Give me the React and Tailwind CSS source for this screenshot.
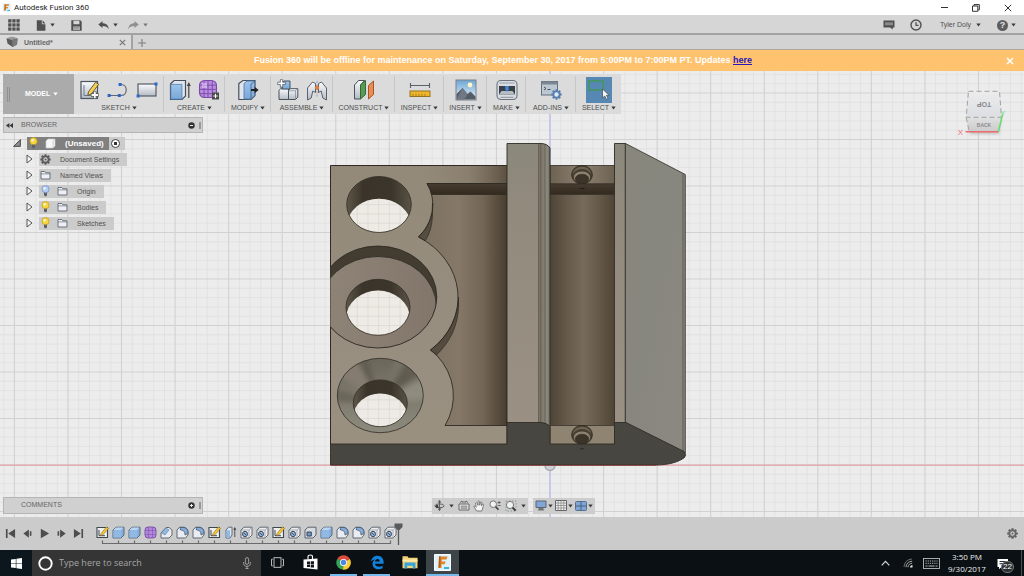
import React from "react";

const range = (a, b) => Array.from({ length: b - a + 1 }, (_, i) => a + i);

function Svg({ w, h, className = "", children, box }) {
  return (
    <svg width={w} height={h} viewBox={box || `0 0 ${w} ${h}`} className={`shrink-0 ${className}`} aria-hidden="true">
      {children}
    </svg>
  );
}

function Caret({ className = "text-[#3c3c3c]" }) {
  return (
    <Svg w={5} h={4} className={className}>
      <path d="M0.3 0.4h4.4L2.5 3.6z" fill="currentColor" />
    </Svg>
  );
}

/* ---------- shared gradients ---------- */

function SharedDefs() {
  return (
    <svg width="0" height="0" className="absolute" aria-hidden="true">
      <defs>
        <linearGradient id="blueFace" x1="0" y1="0" x2="0" y2="1">
          <stop offset="0" stopColor="#9cc3ea" />
          <stop offset="1" stopColor="#7ba8d8" />
        </linearGradient>
        <linearGradient id="greyFace" x1="0" y1="0" x2="0" y2="1">
          <stop offset="0" stopColor="#fafbfd" />
          <stop offset="1" stopColor="#b4bac4" />
        </linearGradient>
        <linearGradient id="skyFace" x1="0" y1="0" x2="0" y2="1">
          <stop offset="0" stopColor="#6ea6d4" />
          <stop offset="1" stopColor="#e4f1f8" />
        </linearGradient>
      </defs>
    </svg>
  );
}

/* ---------- toolbar icons ---------- */

const SketchIcon = () => (
  <Svg w={20} h={22}>
    <rect x="1" y="2.5" width="16.5" height="17" fill="url(#greyFace)" stroke="#4b5560" strokeWidth="1.2" />
    <path d="M4 6v10.5h9" fill="none" stroke="#6b7887" strokeWidth="1" />
    <path d="M8.5 12.8L15.6 3.2l3 2.2-7 9.4-3.8 1.6z" fill="#f5cf4e" stroke="#4d4326" strokeWidth="0.8" />
    <path d="M14.8 12.2v7.6M11 16h7.6" stroke="#555" strokeWidth="3.4" />
    <path d="M14.8 12.8v6.4M11.6 16H18" stroke="#fff" strokeWidth="1.8" />
  </Svg>
);
const ArcLineIcon = () => (
  <Svg w={22} h={20}>
    <path d="M2 15.5h12c7 0 7-11 0-11" fill="none" stroke="#5f6872" strokeWidth="1.2" />
    <path d="M0.6 14h3v3h-3zM10.8 14h3v3h-3zM11.6 3h3v3h-3z" fill="#2a66c8" />
  </Svg>
);
const RectIcon = () => (
  <Svg w={22} h={18}>
    <rect x="2" y="3" width="18" height="12" fill="url(#greyFace)" stroke="#535c68" strokeWidth="1.2" />
    <path d="M18.5 1.5h3v3h-3zM0.6 13.4h3v3h-3z" fill="#2a66c8" />
  </Svg>
);
const ExtrudeIcon = ({ w = 22, h = 22 }) => (
  <Svg w={w} h={h} box="0 0 22 22">
    <path d="M1.5 5L5 1.5h11.5V17L13 20.500H1.500z" fill="#dfe5ec" stroke="#46505c" strokeWidth="1.2" />
    <path d="M1.8 5.4H13v14.8H1.8z" fill="url(#blueFace)" stroke="#4a76a6" strokeWidth="0.7" />
    <path d="M19.8 19V6" stroke="#444" strokeWidth="1.2" />
    <path d="M17.8 7l2-4 2 4z" fill="#444" />
  </Svg>
);
const FormIcon = () => (
  <Svg w={22} h={22}>
    <rect x="1.5" y="1.5" width="17" height="17" rx="5" fill="#b98ce0" stroke="#7b4aa8" strokeWidth="1.1" />
    <path d="M6 2v16M10 2v16M14.3 2v16M2 6.2h16M2 10.4h16M2 14.6h16" stroke="#7b4aa8" strokeWidth="0.9" />
    <path d="M4 4h5v5H4z" fill="#e3cdf6" opacity=".6" />
    <rect x="14" y="13.5" width="7" height="7" fill="#4b4b4b" />
    <path d="M17.5 14.8v4.4M15.3 17h4.4" stroke="#fff" strokeWidth="1" />
  </Svg>
);
const PressPullIcon = () => (
  <Svg w={22} h={22}>
    <path d="M1.8 4.5L6 1.5h12v15l-4 4H1.8z" fill="#dfe5ec" stroke="#46505c" strokeWidth="1.2" />
    <path d="M7 4.5L10 2h7.5v14.5L14 20H7z" fill="url(#blueFace)" stroke="#4a76a6" strokeWidth="0.8" />
    <path d="M14 5v15M14 5l4-3" stroke="#3d6187" strokeWidth="0.8" />
    <path d="M14 11h4" stroke="#222" strokeWidth="2" />
    <path d="M17.6 7.8l4 3.2-4 3.2z" fill="#222" />
  </Svg>
);
const NewComponentIcon = () => (
  <Svg w={22} h={22}>
    <path d="M2 11.5l1.5-1.8h8v10.8H2z" fill="url(#greyFace)" stroke="#49525d" strokeWidth="1" />
    <path d="M5 3.8L7 2h6v8H5z" fill="url(#blueFace)" stroke="#49525d" strokeWidth="1" />
    <path d="M11.5 11.5l2-1.8h7.3v8.5l-2.3 2.3h-7z" fill="url(#greyFace)" stroke="#49525d" strokeWidth="1" />
    <path d="M11.5 11.8h7v8.5M18.5 11.8l2-2" fill="none" stroke="#7b8490" strokeWidth="0.7" />
    <path d="M4.5 0.4v8M0.5 4.4h8" stroke="#49525d" strokeWidth="3.2" />
    <path d="M4.5 1v6.8M1.1 4.4h6.8" stroke="#fff" strokeWidth="1.7" />
  </Svg>
);
const JointIcon = () => (
  <Svg w={22} h={22}>
    <path d="M1.5 9L6.5 3l3 1.500v9L6.800 12l-1.600 7-3.700 2z" fill="url(#greyFace)" stroke="#59626d" strokeWidth="1" />
    <path d="M20.5 9l-5-6-3 1.500v9l2.700-1.500 1.600 7 3.700 2z" fill="url(#greyFace)" stroke="#59626d" strokeWidth="1" />
    <path d="M11 2v16" stroke="#8a8f98" strokeWidth="0.8" strokeDasharray="2 1.4" />
    <path d="M11 6l2.4 2.8L11 11.6 8.6 8.8z" fill="#e7813a" />
  </Svg>
);
const PlaneIcon = () => (
  <Svg w={22} h={22}>
    <path d="M1.5 6L5.5 1.5h6L7.5 6v14h-6z" fill="url(#greyFace)" stroke="#49525d" strokeWidth="1" />
    <path d="M7.5 6l5-4.500v14L7.500 20z" fill="#5a9a55" stroke="#2f6b35" strokeWidth="1" />
    <path d="M15.5 6.500l5-4.500v13.500l-5 4.500z" fill="#ea8d54" stroke="#a75427" strokeWidth="1" />
  </Svg>
);
const MeasureIcon = () => (
  <Svg w={22} h={22}>
    <path d="M1.5 6.5h19" stroke="#59616b" strokeWidth="1" />
    <path d="M1.5 4v5M20.5 4v5" stroke="#59616b" strokeWidth="1.1" />
    <rect x="1" y="12" width="20" height="5.5" fill="#efb62b" stroke="#8a6a1c" strokeWidth="0.9" />
    <path d="M4 14.8v2.4M7 14.8v2.4M10 14.8v2.4M13 14.8v2.4M16 14.8v2.4" stroke="#8a6a1c" strokeWidth="0.7" />
  </Svg>
);
const InsertIcon = () => (
  <Svg w={22} h={22}>
    <rect x="1" y="1" width="20" height="20" fill="url(#skyFace)" stroke="#7a828b" strokeWidth="1" />
    <circle cx="15" cy="6" r="2.4" fill="#fff6c9" />
    <path d="M1.5 20.5V15l6-6 5 6 3-2.500 5 5v3z" fill="#545c66" />
    <path d="M7.5 9l5 6-3 5.500h-8z" fill="#6f7883" />
  </Svg>
);
const MakeIcon = () => (
  <Svg w={22} h={22}>
    <rect x="1" y="1.5" width="20" height="19" rx="4" fill="#d9dde2" stroke="#6b737c" strokeWidth="1.1" />
    <path d="M3.500 4h15" stroke="#9aa1a9" />
    <path d="M3 7h16v8.500H3z" fill="#3a4047" />
    <path d="M3 15.500L5.500 12h11l2.500 3.500z" fill="#b5bcc4" />
    <path d="M9.200 7h3.600v3.600L11 13l-1.800-2.400z" fill="#3d86d6" />
    <path d="M4.500 18.300h13" stroke="#8b929a" />
  </Svg>
);
const GearShape = ({ cx, cy, r, fill, hole }) => (
  <g>
    {range(0, 3).map((i) => (
      <rect key={i} x={cx - r * 0.2} y={cy - r} width={r * 0.4} height={r * 2} fill={fill} transform={`rotate(${i * 45} ${cx} ${cy})`} />
    ))}
    <circle cx={cx} cy={cy} r={r * 0.78} fill={fill} />
    <circle cx={cx} cy={cy} r={r * 0.42} fill={hole} />
  </g>
);
const AddInsIcon = () => (
  <Svg w={22} h={22}>
    <rect x="1.5" y="2.5" width="16" height="13.5" fill="#bcc7d4" stroke="#66707c" strokeWidth="1" />
    <path d="M1.5 2.5h16v3h-16z" fill="#7a8693" />
    <path d="M4 8l2 1.500L4 11M7.500 10.500h3" fill="none" stroke="#3d4650" strokeWidth="0.9" />
    <GearShape cx={16.5} cy={15.5} r={5.2} fill="#587fb0" hole="#dfe7f1" />
  </Svg>
);
const SelectIcon = () => (
  <Svg w={26} h={26}>
    <rect x="3" y="4" width="14" height="9" fill="none" stroke="#3f9a4d" strokeWidth="1.3" />
    <path d="M16.5 12v9l2.200-2 1.800 3.400 1.600-.8-1.700-3.300h2.800z" fill="#f4f6f8" stroke="#4a545e" strokeWidth="0.8" />
  </Svg>
);

function ToolGroup({ label, width, children, last }) {
  return (
    <div className={`flex flex-col items-center py-[2px] ${width}`}>
      <div className={`flex h-full w-full flex-col items-center pl-[1px] ${last ? "" : "border-r border-[#c6c6c6]"}`}>
        <div className="flex h-[27px] items-center justify-center gap-[7px]">{children}</div>
        <button className="flex h-[9px] items-center gap-[2px] whitespace-nowrap text-[7px] leading-[9px] text-[#4c4c4c]">
          {label}
          <Caret />
        </button>
      </div>
    </div>
  );
}

function IconButton({ label, children, className = "" }) {
  return (
    <button aria-label={label} className={`flex shrink-0 items-center justify-center ${className}`}>
      {children}
    </button>
  );
}

function Toolbar() {
  return (
    <div role="toolbar" aria-label="Model tools" className="flex h-[40px] w-fit bg-[#dbdbdb]">
      <button className="flex w-[71px] items-center bg-[#ababab] text-[7px] font-bold text-white">
        <span className="ml-[4px] h-[15px] w-[3px] border-x border-[#8f8f8f]" />
        <span className="ml-[15px] mr-[3px]">MODEL</span>
        <Caret className="text-white" />
      </button>
      <ToolGroup label="SKETCH" width="w-[90px]">
        <IconButton label="Create sketch"><SketchIcon /></IconButton>
        <IconButton label="Line"><ArcLineIcon /></IconButton>
        <IconButton label="Rectangle"><RectIcon /></IconButton>
      </ToolGroup>
      <ToolGroup label="CREATE" width="w-[61px]">
        <IconButton label="Extrude"><ExtrudeIcon /></IconButton>
        <IconButton label="Create form"><FormIcon /></IconButton>
      </ToolGroup>
      <ToolGroup label="MODIFY" width="w-[46px]">
        <IconButton label="Press pull"><PressPullIcon /></IconButton>
      </ToolGroup>
      <ToolGroup label="ASSEMBLE" width="w-[62px]">
        <IconButton label="New component"><NewComponentIcon /></IconButton>
        <IconButton label="Joint"><JointIcon /></IconButton>
      </ToolGroup>
      <ToolGroup label="CONSTRUCT" width="w-[62px]">
        <IconButton label="Offset plane"><PlaneIcon /></IconButton>
      </ToolGroup>
      <ToolGroup label="INSPECT" width="w-[49px]">
        <IconButton label="Measure"><MeasureIcon /></IconButton>
      </ToolGroup>
      <ToolGroup label="INSERT" width="w-[43px]">
        <IconButton label="Insert decal"><InsertIcon /></IconButton>
      </ToolGroup>
      <ToolGroup label="MAKE" width="w-[39px]">
        <IconButton label="3D print"><MakeIcon /></IconButton>
      </ToolGroup>
      <ToolGroup label="ADD-INS" width="w-[50px]">
        <IconButton label="Scripts and add-ins"><AddInsIcon /></IconButton>
      </ToolGroup>
      <ToolGroup label="SELECT" width="w-[45px]" last>
        <IconButton label="Select" className="bg-[#5788b4]"><SelectIcon /></IconButton>
      </ToolGroup>
    </div>
  );
}

/* ---------- browser tree ---------- */

const Bulb = ({ on = true }) => (
  <Svg w={9} h={12}>
    <circle cx="4.5" cy="4.2" r="3.6" fill={on ? "#f6d63f" : "#b5cdf5"} stroke={on ? "#c39a1c" : "#6d8cc4"} strokeWidth="0.7" />
    <circle cx="3.6" cy="3.2" r="1.2" fill="#fff" opacity=".8" />
    <path d="M3 7.800h3v2.800L4.500 11.600 3 10.600z" fill="#5d6168" />
  </Svg>
);
const Folder = () => (
  <Svg w={11} h={10}>
    <path d="M1 9V1.500h3.800l1 1.300H10V9z" fill="#eef0f3" stroke="#6b727c" strokeWidth="1" />
    <path d="M1 3.9h9" stroke="#6b727c" strokeWidth="0.7" />
  </Svg>
);
const Expander = () => (
  <Svg w={7} h={10}>
    <path d="M1 1l5 4-5 4z" fill="#f6f6f6" stroke="#555" strokeWidth="1" />
  </Svg>
);

function TreeRow({ icon, bulb, label }) {
  return (
    <li className="flex h-[16px] items-center pl-[23px]">
      <IconButton label={`Expand ${label}`} className="mr-[6px]"><Expander /></IconButton>
      <div className="flex h-[13px] items-center bg-[#cbcbcb] pl-[1px] pr-[8px] text-[7px] leading-[13px] text-[#505050]">
        {bulb !== undefined && <span className="mr-[7px] ml-[1px]"><Bulb on={bulb} /></span>}
        {icon}
        <span className="ml-[9px]">{label}</span>
      </div>
    </li>
  );
}

function BrowserPanel() {
  return (
    <section aria-label="Browser" className="mt-[3px] w-[200px]">
      <header className="flex h-[16px] items-center border border-[#b5b5b5] bg-[#d0d0d0] text-[7px] text-[#666]">
        <IconButton label="Collapse panel" className="ml-[2px]">
          <Svg w={7} h={5}><path d="M3.4 0v5L0 2.5zM7 0v5L3.6 2.5z" fill="#333" /></Svg>
        </IconButton>
        <h2 className="ml-[8px]">BROWSER</h2>
        <IconButton label="Minimise panel" className="ml-auto">
          <Svg w={7} h={7}><circle cx="3.5" cy="3.5" r="3.2" fill="#333" /><path d="M2 3.5h3" stroke="#eee" /></Svg>
        </IconButton>
        <span className="ml-[4px] mr-[1px] h-[7px] w-[2px] border-x border-[#999]" />
      </header>
      <ul className="mt-[2px]">
        <li className="flex h-[16px] items-center pl-[10px]">
          <IconButton label="Collapse document" className="mr-[6px]">
            <Svg w={8} h={8}><path d="M7.4 0.6v6.8H0.6z" fill="#8a8a8a" stroke="#444" strokeWidth="0.9" /></Svg>
          </IconButton>
          <div className="flex h-[13px] items-center bg-[#808080] pl-[2px] pr-[5px] text-[8px] leading-[13px] font-bold text-white">
            <Bulb />
            <Svg w={11} h={11} className="ml-[7px]">
              <path d="M1 3l2-2h7v7l-2 2H1z" fill="#f7f7f7" stroke="#c9ccd1" strokeWidth="0.7" />
              <path d="M8 3v7M8 3l2-2" stroke="#c3c6cc" strokeWidth="0.8" />
            </Svg>
            <span className="ml-[9px]">(Unsaved)</span>
          </div>
          <div className="flex h-[13px] w-[16px] items-center bg-[#cbcbcb] pl-[2px]">
            <input type="radio" name="active" aria-label="Activate (Unsaved)" defaultChecked className="size-[9px] appearance-none rounded-full border border-[#444] bg-[radial-gradient(circle,#333_0_1.5px,#fff_2px)]" />
          </div>
        </li>
        <TreeRow label="Document Settings" icon={<Svg w={11} h={11}><GearShape cx={5.5} cy={5.5} r={5.2} fill="#5c5c5c" hole="#cbcbcb" /><circle cx="5.5" cy="5.5" r="1" fill="#5c5c5c" /></Svg>} />
        <TreeRow label="Named Views" icon={<Folder />} />
        <TreeRow label="Origin" bulb={false} icon={<Folder />} />
        <TreeRow label="Bodies" bulb icon={<Folder />} />
        <TreeRow label="Sketches" bulb icon={<Folder />} />
      </ul>
    </section>
  );
}

/* ---------- canvas ---------- */

function GridLines() {
  return (
    <g>
      <path d={range(-150, 150).filter((i) => i % 5).map((i) => `M${550 + i * 10.71} -400V1000`).join("")} stroke="#e2e2e2" strokeWidth="1" />
      <path d={range(-90, 60).filter((i) => i % 5).map((i) => `M-1000 ${465 + i * 9.3}H2100`).join("")} stroke="#e2e2e2" strokeWidth="1" />
      <path d={range(-30, 30).map((i) => `M${550 + i * 53.56} -400V1000`).join("")} stroke="#d1d1d1" strokeWidth="1.1" />
      <path d={range(-18, 12).map((i) => `M-1000 ${465 + i * 46.5}H2100`).join("")} stroke="#d1d1d1" strokeWidth="1.1" />
    </g>
  );
}

function ScrewHole({ cy }) {
  return (
    <g>
      <ellipse cx="582" cy={cy} rx="10.4" ry="9.3" fill="#4b4234" stroke="#2d271e" strokeWidth="0.8" />
      <path d={`M573 ${cy - 1}a9 7 0 0 1 18 0a10 8.5 0 0 0 -18 0z`} fill="#6c6352" />
      <ellipse cx="582" cy={cy + 2.6} rx="8.6" ry="6.4" fill="#8d8370" stroke="#2d271e" strokeWidth="0.6" />
      <ellipse cx="582" cy={cy + 4.2} rx="6.8" ry="4.8" fill="#3c3429" stroke="#2d271e" strokeWidth="0.5" />
    </g>
  );
}

function ThroughHole({ id, cx, cy, rx, ry, wy, wrx, wry }) {
  return (
    <g>
      <clipPath id={id}><ellipse cx={cx} cy={cy} rx={rx} ry={ry} /></clipPath>
      <ellipse cx={cx} cy={cy} rx={rx} ry={ry} fill="url(#bore)" />
      <g clipPath={`url(#${id})`}>
        <clipPath id={`${id}w`}><ellipse cx={cx} cy={wy} rx={wrx} ry={wry} /></clipPath>
        <g clipPath={`url(#${id}w)`}>
          <rect x={cx - 50} y={cy - 50} width="100" height="100" fill="#eeebe6" />
          <path d={range(-24, -10).map((i) => `M${550 + i * 10.71} 150V450`).join("")} stroke="#dedad4" strokeWidth="0.9" />
          <path d={range(-34, 0).map((i) => `M330 ${465 + i * 9.3}H440`).join("")} stroke="#dedad4" strokeWidth="0.9" />
        </g>
      </g>
      <ellipse cx={cx} cy={cy} rx={rx} ry={ry} fill="none" stroke="#312c24" strokeWidth="0.8" />
    </g>
  );
}

const POCKET =
  "M427 183.5H507V425.5H445A73.5 64 0 0 0 436.5 355L430.5 350A80.5 70 0 0 0 418.5 237A53.5 47 0 0 0 427 183.5Z";

function Model() {
  const edge = "#2f2b24";
  return (
    <g strokeLinejoin="round">
      <defs>
        <linearGradient id="plate" x1="0" y1="0" x2="0" y2="1">
          <stop offset="0" stopColor="#938978" />
          <stop offset="0.6" stopColor="#978e80" />
          <stop offset="1" stopColor="#9a9080" />
        </linearGradient>
        <linearGradient id="plateTop" x1="0" x2="1">
          <stop offset="0" stopColor="#857a6a" stopOpacity="0" />
          <stop offset="0.5" stopColor="#857a6a" stopOpacity=".6" />
          <stop offset="1" stopColor="#5c5040" />
        </linearGradient>
        <linearGradient id="floor" x1="0" x2="1">
          <stop offset="0" stopColor="#7b7061" />
          <stop offset="0.45" stopColor="#857868" />
          <stop offset="0.72" stopColor="#736655" />
          <stop offset="1" stopColor="#483d2f" />
        </linearGradient>
        <linearGradient id="channel" x1="0" x2="1">
          <stop offset="0" stopColor="#4e4436" />
          <stop offset="0.3" stopColor="#685d4d" />
          <stop offset="0.52" stopColor="#766b5a" />
          <stop offset="0.75" stopColor="#665a49" />
          <stop offset="1" stopColor="#4f4436" />
        </linearGradient>
        <linearGradient id="chTop" x1="0" x2="1">
          <stop offset="0" stopColor="#6d6252" />
          <stop offset="0.5" stopColor="#8c8170" />
          <stop offset="1" stopColor="#6d6252" />
        </linearGradient>
        <linearGradient id="rib" x1="0" y1="0" x2="0" y2="1">
          <stop offset="0" stopColor="#8b887c" />
          <stop offset="0.25" stopColor="#928a7d" />
          <stop offset="1" stopColor="#9a9184" />
        </linearGradient>
        <linearGradient id="fillet" x1="0" x2="1">
          <stop offset="0" stopColor="#787163" />
          <stop offset="0.5" stopColor="#857f71" />
          <stop offset="0.75" stopColor="#8b8a80" />
          <stop offset="1" stopColor="#6c6c64" />
        </linearGradient>
        <linearGradient id="wall" x1="0" y1="0" x2="0" y2="1">
          <stop offset="0" stopColor="#463d30" />
          <stop offset="1" stopColor="#33291d" />
        </linearGradient>
        <linearGradient id="slope" x1="0" y1="0" x2="1" y2="1">
          <stop offset="0" stopColor="#87877d" />
          <stop offset="0.5" stopColor="#88877f" />
          <stop offset="1" stopColor="#8b8982" />
        </linearGradient>
        <linearGradient id="bore" x1="0" x2="1">
          <stop offset="0" stopColor="#5e5749" />
          <stop offset="0.25" stopColor="#3a342b" />
          <stop offset="0.7" stopColor="#3b352b" />
          <stop offset="1" stopColor="#5a5447" />
        </linearGradient>
        <linearGradient id="cone" x1="0" y1="0" x2="0" y2="1">
          <stop offset="0" stopColor="#6c675b" />
          <stop offset="1" stopColor="#8d8a7e" />
        </linearGradient>
        <linearGradient id="cboreFloor" x1="0" x2="1">
          <stop offset="0" stopColor="#8f8577" />
          <stop offset="1" stopColor="#82766a" />
        </linearGradient>
        <clipPath id="plateClip"><rect x="330.5" y="165" width="177" height="279" /></clipPath>
        <clipPath id="cboreClip"><ellipse cx="378" cy="297" rx="58.8" ry="51" /></clipPath>
        <clipPath id="coneClip"><ellipse cx="380.3" cy="395.5" rx="43" ry="37.2" /></clipPath>
        <filter id="soft"><feGaussianBlur stdDeviation="2.6" /></filter>
      </defs>

      {/* base plate and pocket */}
      <rect x="330.5" y="165.5" width="177" height="279" fill="url(#plate)" stroke={edge} strokeWidth="1" />
      <rect x="427" y="166" width="80" height="18" fill="url(#plateTop)" />
      <path d={POCKET} fill="url(#floor)" />
      <path d="M427 183.5H507V194.5H431.8Q430.5 188 427 183.5Z" fill="url(#wall)" stroke={edge} strokeWidth="0.8" />
      <path d="M418.5 237A53.5 47 0 0 0 432.5 203V215Q432 230 425.5 240.5Z" fill="#554d40" stroke={edge} strokeWidth="0.7" />
      <path d="M430.5 350A80.5 70 0 0 0 458.5 297L458.6 306C458 326 450 342 436.5 355Z" fill="#554c3f" stroke={edge} strokeWidth="0.7" />
      <path d={POCKET} fill="none" stroke={edge} strokeWidth="0.9" />

      {/* upper bore */}
      <ThroughHole id="h1" cx={379} cy={204.5} rx={32.3} ry={28} wy={226} wrx={32} wry={27.2} />

      {/* counterbore */}
      <g clipPath="url(#plateClip)">
        <ellipse cx="378" cy="297" rx="58.8" ry="51" fill="#423c31" />
        <g clipPath="url(#cboreClip)">
          <ellipse cx="378" cy="307.5" rx="58.5" ry="51" fill="url(#cboreFloor)" stroke={edge} strokeWidth="0.8" />
        </g>
        <ellipse cx="378" cy="297" rx="58.8" ry="51" fill="none" stroke={edge} strokeWidth="0.9" />
      </g>
      <ThroughHole id="h2" cx={378} cy={307.3} rx={32} ry={28} wy={318} wrx={31.8} wry={27.4} />

      {/* countersink */}
      <ellipse cx="380.3" cy="395.5" rx="43" ry="37.2" fill="url(#cone)" />
      <g clipPath="url(#coneClip)">
        <g filter="url(#soft)">
          <path d="M380 402L333 372L352 352z" fill="#857c6f" />
          <path d="M380 402L352 352L366 350z" fill="#625d51" />
          <path d="M380 402L398 352L408 354z" fill="#777367" />
          <path d="M380 402L412 356L424 370z" fill="#605b50" />
          <path d="M380 402L427 376V400z" fill="#8f8b7f" />
          <path d="M380 402L334 388V402z" fill="#6b665a" />
        </g>
      </g>
      <ellipse cx="380.3" cy="395.5" rx="43" ry="37.2" fill="none" stroke={edge} strokeWidth="0.8" />
      <ThroughHole id="h3" cx={380.3} cy={403.3} rx={27} ry={23.4} wy={416.8} wrx={27} wry={23.2} />

      {/* channel */}
      <rect x="550" y="165.5" width="64.5" height="19" fill="url(#chTop)" stroke={edge} strokeWidth="0.8" />
      <rect x="550" y="194.5" width="64.5" height="231" fill="url(#channel)" />
      <ScrewHole cy={174.8} />
      <rect x="550" y="183.8" width="64.5" height="10.7" fill="url(#wall)" stroke={edge} strokeWidth="0.8" />
      <path d="M579.5 188.500h5" stroke="#241d14" />
      <rect x="550" y="425.5" width="64.5" height="19" fill="#8f8471" stroke={edge} strokeWidth="0.8" />
      <ScrewHole cy={434.8} />

      {/* centre rib */}
      <path d="M507 143.5H541Q547 143.5 550 148V426H507Z" fill="url(#rib)" />
      <path d="M538.5 143.8H541Q547 143.5 550 148V426H538.5Z" fill="url(#fillet)" />
      <path d="M538.5 144V423M540.8 144V423M545 145V424" stroke="#5b564b" strokeWidth="0.7" />
      <path d="M507 444V143.5H541Q547 143.5 550 148V426" fill="none" stroke={edge} strokeWidth="0.9" />

      {/* right block */}
      <rect x="614.5" y="143.5" width="11" height="280" fill="url(#rib)" stroke={edge} strokeWidth="0.9" />
      <path d="M625.5 143.5L685.3 174.5V453L625.5 423Z" fill="url(#slope)" stroke={edge} strokeWidth="0.8" />
      <path d="M625.3 144V423" stroke="#4b473e" strokeWidth="1.2" />
      <path d="M683 174V451" stroke="#63625b" strokeWidth="1.2" />

      {/* front face */}
      <path
        d="M330.5 444H507V422.5H541Q547 422.8 550 426.5V444H614.5V422.5H626L684 451.5Q687 454.5 684.5 457.5C679 462 668 465 656 465H330.5Z"
        fill="#484640"
        stroke={edge}
        strokeWidth="0.9"
      />
      <path d="M580 448.7h4" stroke="#2f2d28" />
    </g>
  );
}

function Scene() {
  return (
    <svg className="absolute inset-0 h-full w-full" viewBox="0 71 1024 446" preserveAspectRatio="xMidYMid slice" role="img" aria-label="Model viewport">
      <GridLines />
      <path d="M550 -400V1000" stroke="#c3c3ee" strokeWidth="1.6" />
      <circle cx="550" cy="465.5" r="5" fill="#cfcfd4" stroke="#aaaab2" strokeWidth="1.4" />
      <path d="M-1000 465.2H2100" stroke="#e3a3a3" strokeWidth="1.2" />
      <Model />
      <path d="M330.5 465.3H656" stroke="#7c3b38" strokeWidth="0.8" />
    </svg>
  );
}

function ViewCube() {
  return (
    <Svg w={50} h={50} box="957 86 50 50">
      <defs>
        <linearGradient id="cubeTop" x1="0" y1="0" x2="0" y2="1">
          <stop offset="0" stopColor="#ececec" />
          <stop offset="1" stopColor="#dcdee2" />
        </linearGradient>
        <linearGradient id="cubeFront" x1="0" y1="0" x2="0" y2="1">
          <stop offset="0" stopColor="#e0e0e1" />
          <stop offset="1" stopColor="#cbcbcc" />
        </linearGradient>
        <filter id="cubeShadow"><feGaussianBlur stdDeviation="1.4" /></filter>
      </defs>
      <path d="M969 122l32-2-2 14h-29z" fill="#9a9a9a" opacity=".55" filter="url(#cubeShadow)" />
      <path d="M968.5 91.3h31l2 26h-35.3z" fill="url(#cubeTop)" />
      <path d="M966.2 117.4h35.3L998.5 131.5h-29.2z" fill="url(#cubeFront)" />
      <path d="M968.5 91.3h31l2 26h-35.3zM966.2 117.4l3 14" fill="none" stroke="#a2a2a2" strokeWidth="1" strokeDasharray="5 3" />
      <path d="M965.5 131.8h33" stroke="#e96b6b" strokeWidth="1.4" />
      <path d="M998.5 131.5l4-17" stroke="#5fdc68" strokeWidth="1.4" />
      <text x="984" y="101.5" fontSize="7" textAnchor="middle" fill="#85878b" transform="rotate(180 984 101.5)" className="font-bold">TOP</text>
      <text x="984" y="127.3" fontSize="5" textAnchor="middle" fill="#8b8c90" className="font-bold">BACK</text>
      <text x="957.8" y="134.5" fontSize="8" fill="#ee7070">X</text>
      <text x="1000.500" y="115.5" fontSize="7" fill="#63e06c">Y</text>
    </Svg>
  );
}

/* ---------- navigation bar ---------- */

function NavBar() {
  return (
    <div className="flex gap-[5px]" role="toolbar" aria-label="Navigation">
      <div className="flex h-[16px] w-[96px] items-center justify-between bg-[#cdcdcd] px-[2px]">
        <IconButton label="Orbit">
          <Svg w={11} h={11}><path d="M5.5 0.500v10" stroke="#666" fill="none" /><path d="M5.500 0l1.800 2.400H3.700zM5.500 11l1.800-2.400H3.700z" fill="#555" /><ellipse cx="5.5" cy="5.8" rx="4.6" ry="1.900" fill="none" stroke="#555" strokeWidth="0.9" /><circle cx="3" cy="6.4" r="1.4" fill="#333" /></Svg>
        </IconButton>
        <Caret />
        <IconButton label="Look at">
          <Svg w={12} h={11}><path d="M1 4h10v6H1z" fill="#e8e8e8" stroke="#666" /><path d="M3.2 6h5.6v2.4H3.2z" fill="#bbb" stroke="#777" strokeWidth="0.7" /><path d="M2 2.6L4 1v1h4V1l2 1.6" fill="none" stroke="#666" /></Svg>
        </IconButton>
        <IconButton label="Pan">
          <Svg w={12} h={12}><path d="M3.6 11C2.6 9 1.4 7.6 0.8 6.4c.7-.8 1.5-.2 2.4.9L2.6 3c.9-.9 1.5-.3 1.8.7L5 5.4V1.4c.8-.9 1.5-.4 1.600.5l.1 3.3.8-2.900c.9-.7 1.500-.1 1.300.8l-.4 2.700 1-1.700c.9-.4 1.400.2 1.100 1C9.900 7.200 9.600 8.600 8.800 11z" fill="#f4f4f4" stroke="#666" strokeWidth="0.8" /></Svg>
        </IconButton>
        <IconButton label="Zoom">
          <Svg w={12} h={11}><circle cx="4.200" cy="4.200" r="3.300" fill="#eef3f6" stroke="#777" /><path d="M6.600 6.600L9.500 9.800" stroke="#444" strokeWidth="1.700" /><path d="M8.500 2.500h3.200M10.100 1v3M8.500 5.500h3.200" stroke="#555" strokeWidth="0.800" /></Svg>
        </IconButton>
        <IconButton label="Fit">
          <Svg w={12} h={12}><path d="M1 1h10v10H1z" fill="none" stroke="#888" strokeWidth="0.800" strokeDasharray="1.500 1.500" /><circle cx="5" cy="5" r="3.600" fill="#eef5f3" stroke="#777" /><path d="M7.600 7.600l3 3" stroke="#333" strokeWidth="1.800" /></Svg>
        </IconButton>
        <Caret />
      </div>
      <div className="flex h-[16px] w-[62px] items-center justify-between bg-[#cdcdcd] px-[2px]">
        <IconButton label="Display settings">
          <Svg w={12} h={11}><path d="M1 1h10v6.500H1z" fill="#7fa6d6" stroke="#5d6670" /><path d="M4 8h4v1.500H4zM2.800 10h6.400" fill="#888" stroke="#666" strokeWidth="0.800" /></Svg>
        </IconButton>
        <Caret />
        <IconButton label="Grid and snaps">
          <Svg w={12} h={11}><path d="M0.500 0.500h11v10h-11z" fill="#eee" stroke="#666" /><path d="M3.200 1v9M6 1v9M8.800 1v9M1 3h10M1 5.500h10M1 8h10" stroke="#8a8a8a" strokeWidth="0.800" /></Svg>
        </IconButton>
        <Caret />
        <IconButton label="Viewports">
          <Svg w={12} h={10}><rect x="0.500" y="0.500" width="11" height="9" rx="1" fill="#7fa6d6" stroke="#56708f" /><path d="M6 0.500v9M0.500 5h11" stroke="#48617f" /></Svg>
        </IconButton>
        <Caret />
      </div>
    </div>
  );
}

/* ---------- timeline ---------- */

const MiniSketch = () => (
  <Svg w={13} h={13}>
    <path d="M1 1.500h10.500v10H1z" fill="#eef0f2" stroke="#3f4650" strokeWidth="1.100" />
    <path d="M3 4v5.700h6" fill="none" stroke="#3f4650" strokeWidth="1" />
    <path d="M5 7.500L10.500 0.800l2 1.600L7 8.800l-2.500.8z" fill="#f2c53a" stroke="#7b611b" strokeWidth="0.500" />
  </Svg>
);
const MiniBox = () => (
  <Svg w={13} h={13}>
    <path d="M1 4l3-2.800h8V9l-3 3H1z" fill="#86afdc" stroke="#4f6076" strokeWidth="0.900" />
    <path d="M1.400 4.200H9V11.600H1.400z" fill="#92b9e3" />
    <path d="M1.500 4L4 1.600h7.400L9 4z" fill="#bcd6f1" />
  </Svg>
);
const MiniForm = () => (
  <Svg w={13} h={13}>
    <rect x="1" y="1" width="11" height="11" rx="3" fill="#b387dd" stroke="#764aa3" strokeWidth="0.900" />
    <path d="M4.500 1v11M8.500 1v11M1 4.500h11M1 8.500h11" stroke="#8a5fb8" strokeWidth="0.800" />
  </Svg>
);
const MiniChamfer = () => (
  <Svg w={13} h={13}>
    <path d="M1 7l5-5.500h3l3 2.500V9l-3 3H1z" fill="#e9ecf0" stroke="#555e69" strokeWidth="0.900" />
    <path d="M1.500 7l4.500-5 3 2-4 5z" fill="#92b9e3" stroke="#5a7ba3" strokeWidth="0.600" />
  </Svg>
);
const MiniFillet = () => (
  <Svg w={13} h={13}>
    <path d="M1 4l2.500-2.800H8c3 .5 4 2.800 4 5.800v2l-2.500 3H1z" fill="#e9ecf0" stroke="#555e69" strokeWidth="0.900" />
    <path d="M4 1.500h4c3 .5 4 3 4 6L9 9c0-3-1-4.800-4.500-5z" fill="#86aedb" stroke="#3e4e63" strokeWidth="0.700" />
  </Svg>
);
const MiniHole = () => (
  <Svg w={13} h={13}>
    <path d="M1 4l3-2.800h8V9l-3 3H1z" fill="#eceef1" stroke="#555e69" strokeWidth="0.900" />
    <path d="M1 4h8v8M9 4l3-2.800" fill="none" stroke="#8a929c" strokeWidth="0.700" />
    <ellipse cx="5" cy="8" rx="2.500" ry="2.700" fill="#8fb3dc" stroke="#333d4a" strokeWidth="0.900" />
    <path d="M4 7l2 2" stroke="#333d4a" strokeWidth="0.800" />
  </Svg>
);
const MiniShell = () => (
  <Svg w={13} h={13}>
    <path d="M1 4l3-2.800h8V9l-3 3H1z" fill="#d6dbe1" stroke="#4f5864" strokeWidth="0.900" />
    <path d="M3 6h4.300v4H3z" fill="#6f97c6" stroke="#333d4a" strokeWidth="0.900" />
  </Svg>
);
const MiniExtrude = () => (
  <Svg w={13} h={13}>
    <path d="M2 4l2.500-2.800H8V9l-2 3H2z" fill="#dfe6ee" stroke="#4f6076" strokeWidth="0.900" />
    <path d="M2.400 4.300H6v7.300H2.400z" fill="#92b9e3" />
    <path d="M10.800 11V3" stroke="#444" strokeWidth="0.900" />
    <path d="M9.200 3.800L10.800 1l1.600 2.800z" fill="#444" />
  </Svg>
);

const FEATURES = [
  ["Sketch1", MiniSketch],
  ["Box1", MiniBox],
  ["Box2", MiniBox],
  ["Form1", MiniForm],
  ["Chamfer1", MiniChamfer],
  ["Fillet1", MiniFillet],
  ["Fillet2", MiniFillet],
  ["Sketch2", MiniSketch],
  ["Extrude1", MiniExtrude],
  ["Hole1", MiniHole],
  ["Hole2", MiniHole],
  ["Sketch3", MiniSketch],
  ["Hole3", MiniHole],
  ["Shell1", MiniShell],
  ["Box3", MiniBox],
  ["Fillet3", MiniFillet],
  ["Fillet4", MiniFillet],
  ["Hole4", MiniHole],
  ["Hole5", MiniHole],
];

function Timeline() {
  const controls = [
    ["Go to start", "M1 1v10h1.800V1zM11 1v10L3.500 6z"],
    ["Step back", "M7.500 1.500v9L1.500 6zM8.500 3.500h1.800v5H8.500z"],
    ["Play", "M2 0.800v10.400L11 6z"],
    ["Step forward", "M4.500 1.500v9L10.500 6zM1.700 3.500h1.800v5H1.700z"],
    ["Go to end", "M1 1v10L8.500 6zM9.200 1v10H11V1z"],
  ];
  return (
    <section aria-label="Timeline" className="flex h-[33px] shrink-0 items-center bg-[#cbcbcb] pr-[6px]">
      <div className="flex items-center gap-[4px] pl-[4px]">
        {controls.map(([label, d]) => (
          <IconButton key={label} label={label} className="w-[13px]">
            <Svg w={11} h={11} box="0 0 12 12"><path d={d} fill="#4d4d4d" /></Svg>
          </IconButton>
        ))}
      </div>
      <ol className="ml-[9px] flex">
        {FEATURES.map(([name, Icon], i) => (
          <li key={name} className="flex w-[16px] flex-col items-center pt-[3px]">
            <IconButton label={name}><Icon /></IconButton>
            <Svg w={16} h={6}>
              <path d={i === 0 ? "M8.500 1.500V4.500H16" : i === FEATURES.length - 1 ? "M0 4.500H8.500V1.500" : "M0 4.500H16M8.500 1.500V4.500"} stroke="#6a6a6a" fill="none" strokeWidth="1.200" />
            </Svg>
          </li>
        ))}
      </ol>
      <IconButton label="Timeline marker" className="-ml-[4px]">
        <Svg w={9} h={22}><path d="M0.500 0.500h8v3.500l-3 3h-2l-3-3z" fill="#5a5a5a" /><path d="M4.500 4v18" stroke="#5a5a5a" strokeWidth="1.300" /></Svg>
      </IconButton>
      <IconButton label="Timeline settings" className="ml-auto">
        <Svg w={11} h={11}><GearShape cx={5.5} cy={5.5} r={5.3} fill="#666" hole="#cbcbcb" /><circle cx="5.500" cy="5.500" r="1" fill="#666" /></Svg>
      </IconButton>
    </section>
  );
}

/* ---------- Windows task bar ---------- */

function TaskButton({ label, active, running, children }) {
  return (
    <button aria-label={label} className={`flex h-full w-[33px] flex-col items-center ${active ? "bg-[#3d4548]" : ""}`}>
      <span className="flex flex-1 items-center">{children}</span>
      <span className={`h-[2px] ${active ? "w-full bg-[#76b9ed]" : running ? "w-[27px] bg-[#76b9ed]" : "w-full"}`} />
    </button>
  );
}

const FusionLogo = ({ size = 17 }) => (
  <Svg w={size} h={size} box="0 0 17 17">
    <path d="M0.500 0.500h16v16h-16z" fill="#dff1f8" stroke="#f7fcfe" />
    <path d="M5 2.500h8.500l-1 3H8l-.3 2h4l-1 2.700H7.500V14H4.500z" fill="#e0862d" />
    <path d="M5 2.500l1.500-.5V13l-2 1z" fill="#b05f18" />
    <path d="M10 13h5v2h-5z" fill="#39b4e6" />
  </Svg>
);

function Taskbar() {
  return (
    <footer className="flex h-[26px] shrink-0 items-stretch bg-[#0a1013] text-white">
      <button aria-label="Start" className="flex w-[32px] items-center justify-center bg-[#0b171c]">
        <Svg w={11} h={11}><path d="M0 1.600l4.800-.7v4.300H0zM5.400.8L11 0v5.200H5.400zM0 5.800h4.800v4.300L0 9.400zM5.400 5.800H11V11l-5.600-.8z" fill="#fff" /></Svg>
      </button>
      <label className="flex w-[229px] items-center bg-[#353535] pl-[6px] pr-[10px]">
        <Svg w={15} h={15}><circle cx="7.500" cy="7.500" r="6.200" fill="none" stroke="#fff" strokeWidth="1.900" /></Svg>
        <input aria-label="Search" placeholder="Type here to search" className="ml-[6px] w-0 flex-1 bg-transparent font-['Open_Sans','Noto_Sans',sans-serif] text-[9px] leading-[12px] outline-none placeholder:text-[#a5a5a5]" />
        <Svg w={8} h={12}><rect x="2.400" y="0.600" width="3.200" height="6.800" rx="1.600" fill="none" stroke="#aaa" strokeWidth="0.900" /><path d="M0.700 5v1.800c0 3.400 6.600 3.400 6.600 0V5M4 9.400v2.200M2.500 11.500h3" fill="none" stroke="#aaa" strokeWidth="0.900" /></Svg>
      </label>
      <nav aria-label="Pinned applications" className="flex">
        <TaskButton label="Task view">
          <Svg w={13} h={11}><rect x="3" y="0.700" width="7" height="9.600" fill="none" stroke="#ccc" strokeWidth="0.900" /><path d="M1.800 2.200H0.500v6.600h1.300M11.200 2.200h1.300v6.600h-1.300" fill="none" stroke="#ccc" strokeWidth="0.900" /></Svg>
        </TaskButton>
        <TaskButton label="Store">
          <Svg w={15} h={16}><path d="M0.500 5.500l14-1V15.500l-14-1.500z" fill="#fff" /><path d="M5 5V2.800c0-2.400 4.500-2.400 4.500 0V5" fill="none" stroke="#fff" strokeWidth="1.100" /><path d="M4 7.500h3v2.500H4zM7.700 7.300H11V10H7.700zM4 10.600h3V13H4zM7.700 10.600H11v2.800H7.700z" fill="#10181b" /></Svg>
        </TaskButton>
        <TaskButton label="Chrome" running>
          <Svg w={15} h={15}>
            <path d="M7.500 7.500L1.300 3.900A7.200 7.200 0 0 1 13.900 4z" fill="#dd4b3e" />
            <path d="M7.500 7.500L1.300 3.800A7.200 7.200 0 0 0 7 14.700z" fill="#35a257" />
            <path d="M7.500 7.500L7 14.700A7.200 7.200 0 0 0 13.900 4z" fill="#fbcb34" />
            <circle cx="7.500" cy="7.500" r="3.500" fill="#fff" />
            <circle cx="7.500" cy="7.500" r="2.700" fill="#4a86e8" />
          </Svg>
        </TaskButton>
        <TaskButton label="Edge" running>
          <Svg w={14} h={15}><path d="M0.800 6.800C1.600 2.800 4.200.7 7.400.7c4 0 6.200 2.800 6.200 6.700v1.300H5c.2 3.400 5 3.800 7.600 2v2.600c-4.200 2.300-10 .8-10-4.300 0-2.300 1-3.700 2.600-4.500C3 4.700 1.500 5.600.8 6.800zM5 6.400h4.700C9.700 3 5.400 3.200 5 6.400z" fill="#1183dc" /></Svg>
        </TaskButton>
        <TaskButton label="File Explorer">
          <Svg w={16} h={14}><path d="M0.500 1.200h5l1 1.500h9v10.500H.5z" fill="#f3d478" /><path d="M.5 4.500h15v2H.5z" fill="#fbe9a9" /><path d="M2.500 7.500h11v6h-2.700v-2.700H5.200v2.700H2.500z" fill="#35a3dc" /></Svg>
        </TaskButton>
        <TaskButton label="Autodesk Fusion 360" active><FusionLogo /></TaskButton>
      </nav>
      <div className="ml-auto flex items-center">
        <IconButton label="Show hidden icons" className="mr-[13px]">
          <Svg w={9} h={6}><path d="M0.700 5.300l3.800-4 3.800 4" fill="none" stroke="#ddd" strokeWidth="1.100" /></Svg>
        </IconButton>
        <IconButton label="Network" className="mr-[10px]">
          <Svg w={10} h={10}><g fill="none" stroke="#bbb" strokeWidth="0.900"><path d="M1 9A8 8 0 0 1 9 1" stroke="#777" /><path d="M3 9.200A6 6 0 0 1 9.200 3.200M5 9.200A4 4 0 0 1 9.200 5.300" /></g><path d="M7 9.500a2.500 2.500 0 0 1 2.500-2.500v2.500z" fill="#ddd" /></Svg>
        </IconButton>
        <IconButton label="Touch keyboard" className="mr-[8px]">
          <Svg w={17} h={11}><rect x="0.500" y="0.500" width="16" height="10" fill="none" stroke="#bbb" strokeWidth="0.900" /><path d="M2.500 3h12M2.500 5.300h12" stroke="#bbb" strokeDasharray="1.200 1" /><path d="M2.500 8h2M5.500 8h6M12.500 8h2" stroke="#bbb" /></Svg>
        </IconButton>
        <div className="w-[38px] whitespace-nowrap text-center font-['Open_Sans','Noto_Sans',sans-serif] text-[8px] leading-[12px] text-[#eee]">
          <div>3:50 PM</div>
          <div>9/30/2017</div>
        </div>
        <button aria-label="22 notifications" className="relative ml-[11px] h-[20px] w-[18px]">
          <Svg w={12} h={12} className="mt-[2px]"><path d="M0.500 1h10.500v8H4.500L2 11.300V9H.5z" fill="#fff" /><path d="M2.500 3.500h6.500M2.500 5.700h6.500" stroke="#0a1013" strokeWidth="0.900" /></Svg>
          <span className="absolute right-[1px] bottom-0 rounded-full border border-[#777] bg-[#2a3033] px-[1px] text-[8px] leading-[10px]">22</span>
        </button>
        <span className="ml-[6px] mr-[2px] h-[26px] w-px bg-[#4a4f52]" />
      </div>
    </footer>
  );
}

/* ---------- window chrome ---------- */

function TitleBar() {
  return (
    <header className="flex h-[15px] shrink-0 items-center bg-white pl-[2px] text-[8px] text-[#222]">
      <FusionLogo size={9} />
      <h1 className="ml-[3px] font-[Roboto,'Noto_Sans',sans-serif] text-[8px]">Autodesk Fusion 360</h1>
      <div className="ml-auto flex">
        <IconButton label="Minimise" className="w-[31px]"><Svg w={7} h={7}><path d="M0 3.500h7" stroke="#333" /></Svg></IconButton>
        <IconButton label="Restore" className="w-[31px]"><Svg w={8} h={8}><path d="M0.500 2h5.300v5.300H.5zM2 2V.6h5.300v5.300H6" fill="none" stroke="#333" /></Svg></IconButton>
        <IconButton label="Close" className="w-[33px]"><Svg w={8} h={8}><path d="M0.800.8l6.400 6.400M7.200.8L.8 7.200" stroke="#333" /></Svg></IconButton>
      </div>
    </header>
  );
}

function AppBar() {
  return (
    <div className="flex h-[20px] shrink-0 items-center border-b-2 border-[#a2a2a2] bg-[#d6d6d6] px-[8px] pt-[2px] text-[7px] text-[#505050]">
      <IconButton label="Data panel">
        <Svg w={12} h={12}>{range(0, 2).map((r) => range(0, 2).map((c) => <rect key={`${r}${c}`} x={c * 4.1 + 0.2} y={r * 4.1 + 0.2} width="3.300" height="3.300" fill="#505050" />))}</Svg>
      </IconButton>
      <button aria-label="File" className="ml-[16px] flex items-center gap-[4px]">
        <Svg w={10} h={11}><path d="M0.800.3h5v4h3.600v6.400H.8z" fill="#505050" /><path d="M6.600.3l2.800 3.200H6.600z" fill="#505050" /></Svg>
        <Caret />
      </button>
      <IconButton label="Save" className="ml-[16px]">
        <Svg w={11} h={11}><path d="M0.300.3h9l1.400 1.400v9H.3z" fill="#505050" /><path d="M2.400.8h6v3.400h-6zM2.400 6.600h6.300v3.300H2.400z" fill="#d6d6d6" /><path d="M3 7.700h5M3 9h5" stroke="#505050" strokeWidth="0.600" /></Svg>
      </IconButton>
      <button aria-label="Undo" className="ml-[16px] flex items-center gap-[4px]">
        <Svg w={11} h={9}><path d="M0.300 3.500L4.500 0v2.200c4 0 6 2.300 6.200 6C9.500 5.800 7.800 4.900 4.500 4.900V7z" fill="#505050" /></Svg>
        <Caret />
      </button>
      <button aria-label="Redo" className="ml-[10px] flex items-center gap-[4px]">
        <Svg w={11} h={9}><path d="M10.700 3.500L6.500 0v2.200c-4 0-6 2.300-6.200 6C1.500 5.800 3.200 4.900 6.500 4.900V7z" fill="#8f8f8f" /></Svg>
        <Caret className="text-[#777]" />
      </button>
      <IconButton label="Messages" className="ml-auto">
        <Svg w={12} h={10}><path d="M0.500.5h11v7H9.800v2L7 7.500H.5z" fill="#505050" /><path d="M2 2.300h8v3H2z" fill="#8a8a8a" /></Svg>
      </IconButton>
      <IconButton label="Job status" className="ml-[15px]">
        <Svg w={12} h={12}><circle cx="6" cy="6" r="5" fill="none" stroke="#505050" strokeWidth="1.400" /><path d="M6 3v3.300h2.600" fill="none" stroke="#505050" strokeWidth="1.200" /></Svg>
      </IconButton>
      <button className="ml-[18px] flex items-center gap-[5px]">Tyler Doly<Caret /></button>
      <button aria-label="Help" className="ml-[16px] flex items-center gap-[3px]">
        <span className="flex size-[11px] items-center justify-center rounded-full bg-[#5d5d5d] text-[9px] font-bold leading-[11px] text-[#e6e6e6]">?</span>
        <Caret />
      </button>
    </div>
  );
}

function TabStrip() {
  return (
    <div className="flex h-[15px] shrink-0 items-stretch border-b border-[#b0a898] bg-[#d3d3d3] text-[8px] text-[#666]">
      <div className="flex w-[133px] items-center border-r-2 border-[#a2a2a2] bg-[#dadada] pl-[6px] pr-[5px]">
        <Svg w={12} h={12}><path d="M0.500 2.500L6 .8l5.500 1.700L11 8.500 6.500 11 1.500 7.500z" fill="#5a5a5a" /><path d="M.5 2.500L6 .8l5.500 1.700L6 4z" fill="#9b9b9b" /><path d="M6 4l5.500-1.500L11 8.500 6.500 11z" fill="#787878" /></Svg>
        <button className="ml-[6px] pt-[2px] text-[7px] leading-[12px] font-bold">Untitled*</button>
        <IconButton label="Close tab" className="ml-auto pt-[1px]"><Svg w={7} h={7}><path d="M0.800.8l5.400 5.400M6.200.8L.8 6.200" stroke="#777" strokeWidth="1.200" /></Svg></IconButton>
      </div>
      <IconButton label="New tab" className="ml-[5px] pt-[2px]"><Svg w={8} h={8}><path d="M4 0v8M0 4h8" stroke="#808080" strokeWidth="1.200" /></Svg></IconButton>
    </div>
  );
}

function Banner() {
  return (
    <div role="status" className="flex h-[21px] shrink-0 items-center bg-[#ffc26f] pr-[10px] text-[9px] font-bold text-white">
      <p className="flex-1 text-center">
        Fusion 360 will be offline for maintenance on Saturday, September 30, 2017 from 5:00PM to 7:00PM PT. Updates{" "}
        <a href="#updates" className="text-[#2a17b8] underline">here</a>
      </p>
      <IconButton label="Dismiss"><Svg w={8} h={8}><path d="M1 1l6 6M7 1L1 7" stroke="#fff" strokeWidth="1.500" /></Svg></IconButton>
    </div>
  );
}

function CommentsBar() {
  return (
    <section className="flex h-[17px] w-[200px] items-center border border-[#b5b5b5] bg-[#d0d0d0] text-[7px] text-[#666]">
      <h2 className="ml-[17px]">COMMENTS</h2>
      <IconButton label="Expand comments" className="ml-auto">
        <Svg w={7} h={7}><circle cx="3.500" cy="3.500" r="3.200" fill="#333" /><path d="M2 3.500h3M3.500 2v3" stroke="#eee" /></Svg>
      </IconButton>
      <span className="ml-[4px] mr-[1px] h-[7px] w-[2px] border-x border-[#999]" />
    </section>
  );
}

export default function App() {
  return (
    <div className="flex h-screen flex-col overflow-hidden bg-[#ececec] font-['Liberation_Sans',Arial,sans-serif]">
      <SharedDefs />
      <TitleBar />
      <AppBar />
      <TabStrip />
      <Banner />
      <main className="relative min-h-0 flex-1">
        <Scene />
        <div className="relative flex h-full flex-col pl-[3px] pt-[3px] pb-[3px]">
          <div className="flex items-start justify-between">
            <div>
              <Toolbar />
              <BrowserPanel />
            </div>
            <div className="pr-[17px] pt-[12px]"><ViewCube /></div>
          </div>
          <div className="mt-auto grid grid-cols-[1fr_auto_1fr] items-center">
            <CommentsBar />
            <NavBar />
          </div>
        </div>
      </main>
      <Timeline />
      <Taskbar />
    </div>
  );
}
